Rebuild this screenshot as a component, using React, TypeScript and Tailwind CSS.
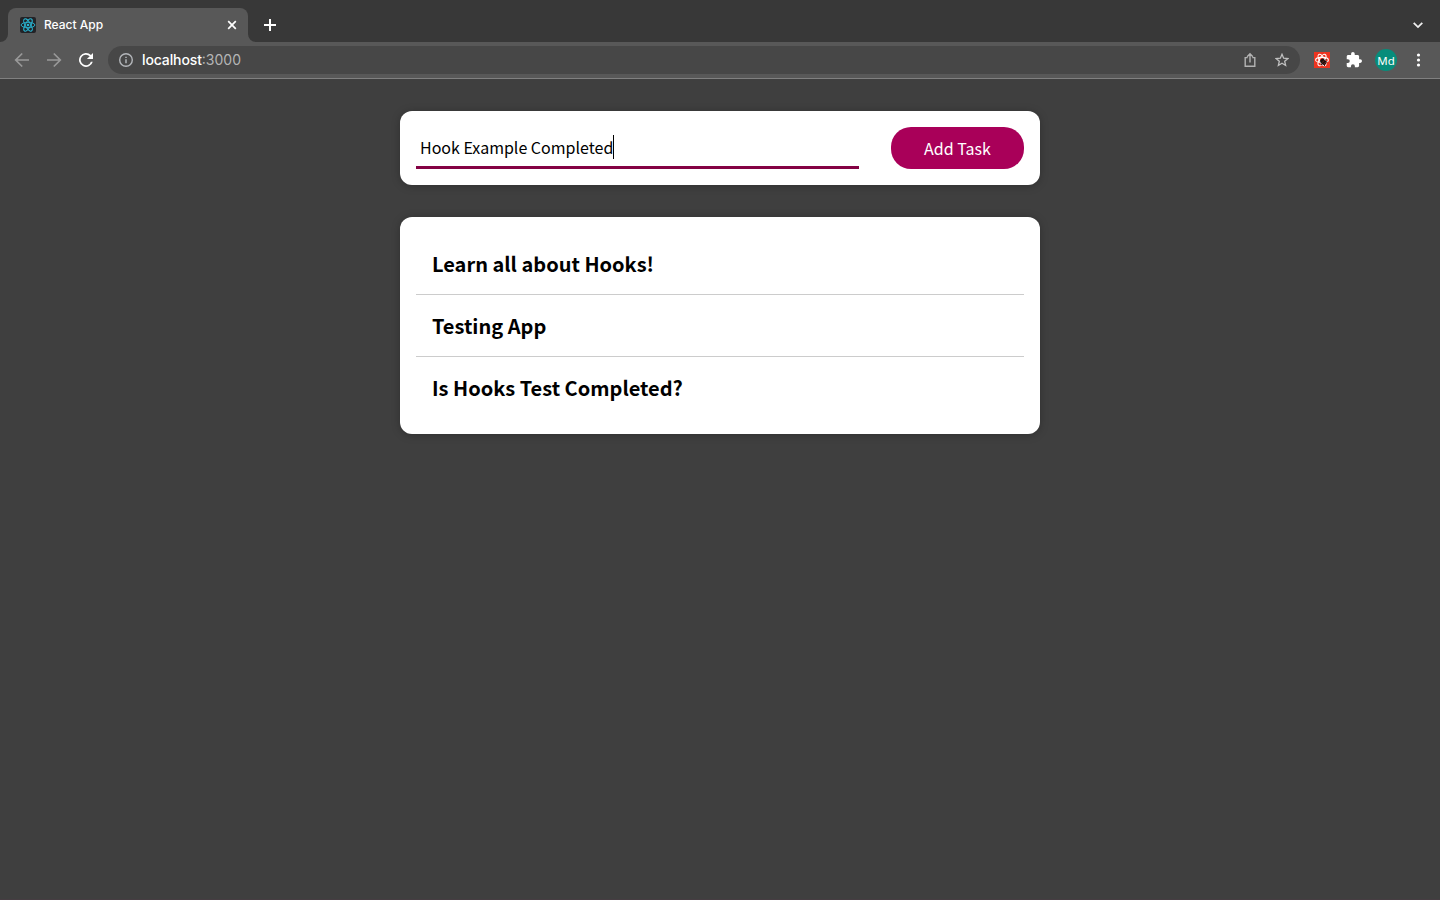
import React from "react";

const tasks = ["Learn all about Hooks!", "Testing App", "Is Hooks Test Completed?"];

function ReactLogo({ stroke, size, core }: { stroke: string; size: number; core: number }) {
  return (
    <svg width={size} height={size} viewBox="-8 -8 16 16" fill="none" stroke={stroke} strokeWidth="0.95">
      <ellipse rx="6.9" ry="2.7" />
      <ellipse rx="6.9" ry="2.7" transform="rotate(60)" />
      <ellipse rx="6.9" ry="2.7" transform="rotate(120)" />
      <circle r={core} fill={stroke} stroke="none" />
    </svg>
  );
}

function TabStrip() {
  return (
    <div className="flex h-[42px] items-end bg-[#383838]">
      <svg className="shrink-0" width="8" height="8" viewBox="0 0 8 8">
        <path d="M0 8A8 8 0 0 0 8 0V8Z" fill="#585858" />
      </svg>
      <div className="flex h-[34px] w-[240px] shrink-0 items-center rounded-t-[8px] bg-[#585858] pl-3 pr-[11px]">
        <span className="flex size-4 items-center justify-center rounded-[2px] bg-[#222327]">
          <ReactLogo stroke="#29b3d0" size={16} core={1.3} />
        </span>
        <span className="ml-2 flex-1 font-[Inter] text-[12px] leading-4 font-medium text-white">React App</span>
        <svg width="10" height="10" viewBox="0 0 10 10" stroke="#fff" strokeWidth="1.7">
          <path d="M1.2 1.2L8.8 8.8M8.8 1.2L1.2 8.8" />
        </svg>
      </div>
      <svg className="shrink-0" width="8" height="8" viewBox="0 0 8 8">
        <path d="M8 8A8 8 0 0 1 0 0V8Z" fill="#585858" />
      </svg>
      <div className="flex h-[34px] flex-1 items-center justify-between pl-2 pr-[17px]">
        <svg width="12" height="12" viewBox="0 0 12 12" stroke="#fff" strokeWidth="2">
          <path d="M6 0V12M0 6H12" />
        </svg>
        <svg width="10" height="8" viewBox="0 0 10 8" stroke="#eee" strokeWidth="1.8" fill="none">
          <path d="M0.7 1.8L5 6.1L9.3 1.8" />
        </svg>
      </div>
    </div>
  );
}

function Toolbar() {
  return (
    <div className="flex h-[37px] items-center border-b border-[#808080] bg-[#585858] pl-[14px] pr-[14px]">
      <svg width="16" height="16" viewBox="0 0 16 16" stroke="#999" strokeWidth="1.7" fill="none">
        <path d="M15 8H2M8.2 1.5L1.7 8L8.2 14.5" />
      </svg>
      <svg className="ml-4" width="16" height="16" viewBox="0 0 16 16" stroke="#999" strokeWidth="1.7" fill="none">
        <path d="M1 8H14M7.8 1.5L14.3 8L7.8 14.5" />
      </svg>
      <svg className="ml-4" width="16" height="16" viewBox="0 0 16 16" fill="#fff">
        <path d="M12.95 3.05A7 7 0 1 0 14.77 9.8H12.9A5.25 5.25 0 1 1 11.7 4.3L8.9 7.1H15V1Z" />
      </svg>
      <div className="ml-[14px] flex h-7 w-[1192px] items-center rounded-full bg-[#474747] pl-[11px] pr-[11px]">
        <svg width="14" height="14" viewBox="0 0 14 14" fill="none" stroke="#b3b6ba">
          <circle cx="7" cy="7" r="6.3" strokeWidth="1.4" />
          <path d="M7 6.2V10.2M7 3.7V5.1" strokeWidth="1.5" />
        </svg>
        <span className="ml-[9px] flex-1 font-[Inter] text-[14px] leading-5 text-white">
          <span className="font-medium tracking-[-0.12px]">localhost</span>
          <span className="text-[#b5b5b5]">:3000</span>
        </span>
        <svg width="14" height="16" viewBox="0 0 14 16" fill="none" stroke="#b3b3b3" strokeWidth="1.4">
          <path d="M4.7 5.6H2.2V14.3H11.8V5.6H9.3M7 10.5V2M4.1 4.7L7 1.8L9.9 4.7" />
        </svg>
        <svg className="ml-[18px]" width="14" height="14" viewBox="0 0 14 14" fill="none" stroke="#c0c0c0" strokeWidth="1.3">
          <path d="M7 1.3L8.65 5.15L12.9 5.55L9.7 8.35L10.65 12.5L7 10.3L3.35 12.5L4.3 8.35L1.1 5.55L5.35 5.15Z" />
        </svg>
      </div>
      <div className="ml-[14px] flex size-4 items-center justify-center bg-[#ed3420]">
        <svg width="16" height="16" viewBox="0 0 16 16" fill="none">
          <g stroke="#fff" strokeWidth="1.1">
            <ellipse cx="8" cy="8" rx="6.4" ry="2.6" />
            <ellipse cx="8" cy="8" rx="6.4" ry="2.6" transform="rotate(60 8 8)" />
            <ellipse cx="8" cy="8" rx="6.4" ry="2.6" transform="rotate(120 8 8)" />
          </g>
          <ellipse cx="9.3" cy="9.9" rx="3.3" ry="2.5" fill="#1b1110" transform="rotate(42 9.3 9.9)" />
          <path d="M6.5 8.4L9.5 6.7M8 12L6.8 13.2M10.8 12.6L10.3 14M11.3 8L12.4 7.4M11.9 10L13.2 9.8" stroke="#1b1110" strokeWidth="0.9" />
          <path d="M7.6 10.8L10.6 8.4M9.4 12.2L12 10.2" stroke="#ed3420" strokeWidth="0.4" />
        </svg>
      </div>
      <svg className="ml-4" width="16" height="16" viewBox="1 1 22 22" fill="#fff">
        <path d="M20.5 11H19V7c0-1.1-.9-2-2-2h-4V3.5a2.5 2.5 0 0 0-5 0V5H4c-1.1 0-1.99.9-1.99 2v3.8H3.5a2.7 2.7 0 0 1 0 5.4H2V20c0 1.1.9 2 2 2h3.8v-1.5a2.7 2.7 0 0 1 5.4 0V22H17c1.1 0 2-.9 2-2v-4h1.5a2.5 2.5 0 0 0 0-5z" />
      </svg>
      <div className="ml-[13px] flex size-[22px] items-center justify-center rounded-full bg-[#078d7b] pt-0.5 font-['Noto_Sans'] text-[11.5px] leading-none text-white">
        Md
      </div>
      <svg className="ml-[19px]" width="5" height="14" viewBox="0 0 5 14" fill="#fff">
        <circle cx="2.5" cy="2" r="1.6" />
        <circle cx="2.5" cy="7" r="1.6" />
        <circle cx="2.5" cy="12" r="1.6" />
      </svg>
    </div>
  );
}

export default function App() {
  return (
    <div className="flex h-[900px] w-full flex-col overflow-hidden border-b border-[#463d42] bg-[#3f3f3f]">
      <TabStrip />
      <Toolbar />
      <main className="flex flex-col items-center gap-8 pt-8 font-['Noto_Sans_CJK_JP','Noto_Sans_CJK_SC',sans-serif] text-black">
        <section className="flex h-[74px] w-[640px] justify-between rounded-[12px] bg-white p-4 shadow-[0_1px_8px_rgba(0,0,0,0.25)]">
          <div className="flex w-[443px] items-center border-b-[3px] border-[#840244] pl-1">
            <span className="text-[16px] leading-6 whitespace-nowrap">Hook Example Completed</span>
            <span className="h-6 w-px bg-black" />
          </div>
          <button className="flex h-[42px] w-[133px] items-center justify-center rounded-[20px] bg-[#a90059] text-[16px] leading-6 text-white">
            Add Task
          </button>
        </section>
        <section className="w-[640px] rounded-[12px] bg-white p-4 shadow-[0_1px_8px_rgba(0,0,0,0.25)]">
          <ul>
            {tasks.map((task) => (
              <li key={task} className="flex h-[62px] items-center border-b border-[#ccc] px-4 last:h-[61px] last:border-b-0">
                <h2 className="text-[20px] leading-8 font-bold">{task}</h2>
              </li>
            ))}
          </ul>
        </section>
      </main>
    </div>
  );
}
